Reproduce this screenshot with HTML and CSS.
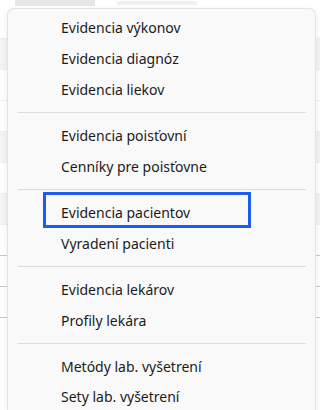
FILE: index.html
```html
<!DOCTYPE html>
<html lang="sk">
<head>
    <meta charset="UTF-8">
    <meta name="viewport" content="width=device-width, initial-scale=1.0">
    <title>Menu</title>
    <link rel="stylesheet" href="styles.css">
</head>
<body>
    <div class="app">
        <div class="app-top">
            <span class="app-tab"></span>
            <span class="app-title"></span>
        </div>
        <div class="app-rows">
            <div class="app-row"></div>
            <div class="app-row shade"></div>
            <div class="app-row"></div>
            <div class="app-row"></div>
            <div class="app-row shade"></div>
            <div class="app-row"></div>
            <div class="app-row shade"></div>
            <div class="app-row line"></div>
            <div class="app-row line"></div>
            <div class="app-row line"></div>
        </div>
    </div>

    <div class="menu">
        <div class="menu-item">Evidencia výkonov</div>
        <div class="menu-item">Evidencia diagnóz</div>
        <div class="menu-item">Evidencia liekov</div>
        <div class="menu-sep"></div>
        <div class="menu-item">Evidencia poisťovní</div>
        <div class="menu-item">Cenníky pre poisťovne</div>
        <div class="menu-sep"></div>
        <div class="menu-item focused">Evidencia pacientov</div>
        <div class="menu-item">Vyradení pacienti</div>
        <div class="menu-sep"></div>
        <div class="menu-item">Evidencia lekárov</div>
        <div class="menu-item">Profily lekára</div>
        <div class="menu-sep"></div>
        <div class="menu-item">Metódy lab. vyšetrení</div>
        <div class="menu-item last">Sety lab. vyšetrení</div>
    </div>
</body>
</html>
```

FILE: styles.css
```css
body {
    margin: 0;
    font-family: "Noto Sans", "Open Sans", sans-serif;
    background-color: #ffffff;
    color: #1b1b1b;
    overflow: hidden;
    height: 410px;
}

/* App window behind the menu */
.app {
    height: 100%;
    overflow: hidden;
}

.app-top {
    height: 8px;
    display: flex;
    gap: 22px;
}

.app-tab {
    margin-left: 15px;
    width: 80px;
    height: 6px;
    background-color: #e6e6e6;
}

.app-title {
    width: 80px;
    height: 4px;
    margin-top: 1px;
    background-color: #f0f0f0;
}

.app-rows {
    display: flex;
    flex-direction: column;
}

.app-row {
    height: 30px;
    border-bottom: 1px solid #eeeeee;
}

.app-row.shade {
    background-color: #f3f3f3;
}

.app-row.line {
    border-bottom: 1px solid #c8c8c8;
}

/* Context menu */
.menu {
    position: absolute;
    top: 8px;
    left: 7px;
    bottom: 0;
    width: 307px;
    padding-top: 3px;
    overflow: hidden;
    background-color: #f9f9f9;
    border: 1px solid #e3e3e3;
    border-bottom: none;
    border-radius: 7px 7px 0 0;
    box-shadow: 0 2px 6px rgba(0, 0, 0, 0.08);
}

.menu-item {
    height: 31px;
    line-height: 31px;
    padding-left: 53px;
    font-size: 14px;
    color: #1b1b1b;
    position: relative;
    white-space: nowrap;
}

.menu-item.last {
    height: 27px;
    line-height: 30px;
}

.menu-item.focused::after {
    content: "";
    position: absolute;
    left: 35px;
    top: -5px;
    width: 202px;
    height: 30px;
    border: 3px solid #1e5bf0;
}

.menu-sep {
    height: 1px;
    margin: 7px 9px 7px 10px;
    background-color: #dcdcdc;
}
```
